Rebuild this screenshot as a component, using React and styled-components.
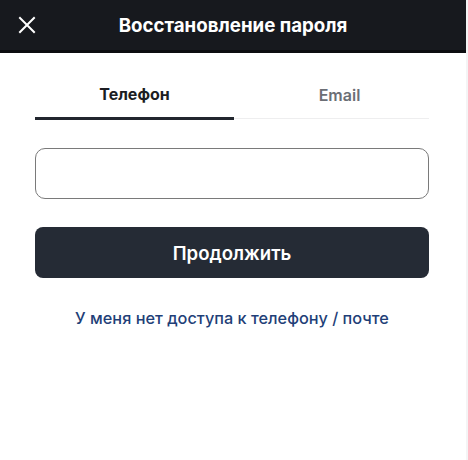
import React, { useState } from "react";
import styled, { createGlobalStyle } from "styled-components";

const Global = createGlobalStyle`
  html, body { margin: 0; padding: 0; background: #f4f4f5; }
  body { font-family: Inter, "Noto Sans", sans-serif; }
  * { box-sizing: border-box; }
`;

const Page = styled.div`
  width: 466px;
  height: 460px;
  background: #ffffff;
  display: flex;
  flex-direction: column;
`;

const Header = styled.header`
  height: 53px;
  background: #17191e;
  border-bottom: 3px solid #0c0d10;
  display: grid;
  grid-template-columns: 54px 1fr 54px;
  align-items: center;
`;

const CloseButton = styled.button`
  border: 0;
  background: transparent;
  padding: 0;
  width: 54px;
  height: 50px;
  display: flex;
  align-items: center;
  justify-content: center;
  color: #ffffff;
`;

const Title = styled.h1`
  margin: 0;
  text-align: center;
  color: #ffffff;
  font-size: 18.7px;
  font-weight: 700;
`;

const Body = styled.main`
  padding: 0 37px 0 35px;
  display: flex;
  flex-direction: column;
`;

const Tabs = styled.div`
  display: grid;
  grid-template-columns: 199px 1fr;
  margin-top: 30px;
`;

const Tab = styled.button`
  border: 0;
  background: transparent;
  padding: 0 0 12px ${(p) => (p.$active ? "0" : "16px")};
  font-family: inherit;
  font-size: 16px;
  font-weight: ${(p) => (p.$active ? 700 : 600)};
  color: ${(p) => (p.$active ? "#1b1d22" : "#6b6e75")};
  border-bottom: ${(p) => (p.$active ? "3px solid #22262e" : "1px solid #eeeeef")};
  margin-bottom: ${(p) => (p.$active ? "0" : "1px")};
  align-self: end;
  height: ${(p) => (p.$active ? "37px" : "35px")};
  border-radius: ${(p) => (p.$active ? "2px 2px 0 0" : "0")};
  cursor: pointer;
`;

const Input = styled.input`
  margin-top: 28px;
  height: 51px;
  border: 1px solid #7a7a7a;
  border-radius: 10px;
  padding: 0 14px;
  font-family: inherit;
  font-size: 16px;
  outline: none;
`;

const PrimaryButton = styled.button`
  margin-top: 28px;
  height: 51px;
  border: 0;
  border-radius: 8px;
  background: #252b35;
  color: #ffffff;
  font-family: inherit;
  font-size: 18.6px;
  font-weight: 600;
  cursor: pointer;
`;

const LinkText = styled.a`
  margin-top: 30px;
  text-align: center;
  color: #1f3f78;
  font-size: 16.3px;
  font-weight: 500;
  text-decoration: none;
`;

export default function App() {
  const [tab, setTab] = useState("phone");
  return (
    <>
      <Global />
      <Page>
        <Header>
          <CloseButton aria-label="close">
            <svg width="18" height="18" viewBox="0 0 18 18" fill="none">
              <path d="M2 2L16 16M16 2L2 16" stroke="#fff" strokeWidth="2" strokeLinecap="square" />
            </svg>
          </CloseButton>
          <Title>Восстановление пароля</Title>
          <span />
        </Header>
        <Body>
          <Tabs>
            <Tab $active={tab === "phone"} onClick={() => setTab("phone")}>Телефон</Tab>
            <Tab $active={tab === "email"} onClick={() => setTab("email")}>Email</Tab>
          </Tabs>
          <Input />
          <PrimaryButton>Продолжить</PrimaryButton>
          <LinkText href="#">У меня нет доступа к телефону / почте</LinkText>
        </Body>
      </Page>
    </>
  );
}
